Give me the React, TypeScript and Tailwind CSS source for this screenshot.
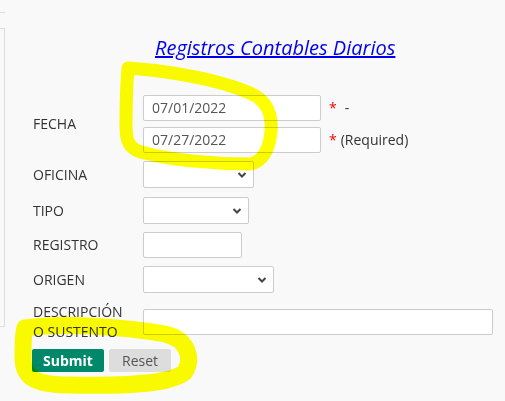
import React from "react";

const Chevron = () => (
  <svg width="10" height="7" viewBox="0 0 10 7" className="absolute right-[6px] top-1/2 -translate-y-1/2 pointer-events-none">
    <path d="M1.5 1.5 L5 5 L8.5 1.5" fill="none" stroke="#444" strokeWidth="2" />
  </svg>
);

const Select = ({ w }: { w: string }) => (
  <div className={`relative h-[27px] ${w} bg-white border border-[#ccc] rounded-[2px]`}>
    <Chevron />
  </div>
);

const Label = ({ children }: { children: React.ReactNode }) => (
  <div className="w-[110px] text-[14px] leading-[20px] text-[#333] shrink-0">{children}</div>
);

export default function App() {
  return (
    <div
      className="relative w-[505px] h-[401px] bg-[#f9f9f9] overflow-hidden flex"
      style={{ fontFamily: '"Open Sans", sans-serif' }}
    >
      <div className="w-[5px] shrink-0 flex flex-col">
        <div className="h-[13px] border-b border-[#ddd]" />
        <div className="mt-[15px] h-[299px] border-t border-r border-b border-[#ddd]" />
      </div>
      <div className="flex-1 flex flex-col pl-[28px]">
        <div className="pt-[34px] pl-[122px] h-[95px]">
          <a className="text-[20px] leading-[27px] italic underline text-[#0000ee]">
            Registros Contables Diarios
          </a>
        </div>
        <div className="flex items-center h-[57px]">
          <Label>FECHA</Label>
          <div className="flex flex-col gap-[6px]">
            <div className="flex items-center">
              <div className="h-[26px] w-[178px] bg-white border border-[#ccc] rounded-[2px] pl-[8px] flex items-center text-[14px] text-[#555]">
                07/01/2022
              </div>
              <span className="ml-[8px] text-[14px] text-[#e00]">*</span>
              <span className="ml-[8px] text-[14px] text-[#333]">-</span>
            </div>
            <div className="flex items-center">
              <div className="h-[26px] w-[178px] bg-white border border-[#ccc] rounded-[2px] pl-[8px] flex items-center text-[14px] text-[#555]">
                07/27/2022
              </div>
              <span className="ml-[8px] text-[14px] text-[#e00]">*</span>
              <span className="ml-[4px] text-[14px] text-[#333]">(Required)</span>
            </div>
          </div>
        </div>
        <div className="flex items-center h-[27px] mt-[9px]">
          <Label>OFICINA</Label>
          <Select w="w-[111px]" />
        </div>
        <div className="flex items-center h-[27px] mt-[9px]">
          <Label>TIPO</Label>
          <Select w="w-[106px]" />
        </div>
        <div className="flex items-center h-[26px] mt-[8px]">
          <Label>REGISTRO</Label>
          <div className="h-[26px] w-[99px] bg-white border border-[#ccc] rounded-[2px]" />
        </div>
        <div className="flex items-center h-[27px] mt-[8px]">
          <Label>ORIGEN</Label>
          <Select w="w-[131px]" />
        </div>
        <div className="flex items-center h-[40px] mt-[9px]">
          <Label>
            DESCRIPCIÓN
            <br />O SUSTENTO
          </Label>
          <div className="h-[26px] w-[350px] bg-white border border-[#ccc] rounded-[2px]" />
        </div>
        <div className="flex gap-[5px] mt-[7px] -ml-[1px]">
          <button className="h-[23px] w-[72px] bg-[#00886b] text-white font-bold text-[14px] rounded-[2px] leading-[23px]">
            Submit
          </button>
          <button className="h-[23px] w-[62px] bg-[#dddddd] text-[#555] text-[14px] rounded-[2px] leading-[23px]">
            Reset
          </button>
        </div>
      </div>
      <svg
        className="absolute inset-0 pointer-events-none mix-blend-multiply"
        width="505"
        height="401"
        viewBox="0 0 505 401"
      >
        <path
          d="M128,68 C160,70 215,78 250,93 C268,101 272,115 271,130 C270,150 262,162 250,164 C215,164 170,160 145,153 C128,150 126,140 126,125 C126,100 127,80 128,68 Z"
          fill="none"
          stroke="#ffff00"
          strokeWidth="13"
          strokeLinejoin="round"
        />
        <path
          d="M25,328 C60,323 120,326 165,334 C190,340 192,360 185,372 C170,385 120,386 70,385 C35,385 22,378 23,355 C23,340 24,331 25,328 Z"
          fill="none"
          stroke="#ffff00"
          strokeWidth="17"
          strokeLinejoin="round"
        />
      </svg>
    </div>
  );
}
